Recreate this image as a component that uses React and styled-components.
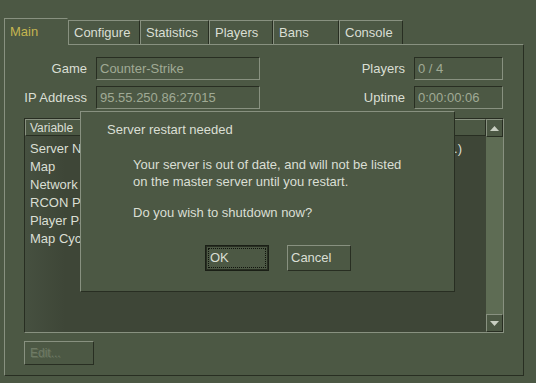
import React from "react";
import styled, { createGlobalStyle } from "styled-components";

const C = {
  bg: "#4c5844",
  light: "#889180",
  dark: "#282e22",
  text: "#dadfd4",
  dim: "#a0aa95",
  gold: "#c4b550",
  list: "#3e4637",
  track: "#5e6c54",
};

const Global = createGlobalStyle`
  html, body { margin: 0; padding: 0; background: ${C.bg}; }
  body { font-family: "Liberation Sans", Tahoma, sans-serif; font-size: 12px; color: ${C.text}; }
`;

const Screen = styled.div`
  position: relative;
  width: 536px;
  height: 383px;
  overflow: hidden;
  background: ${C.bg};
  padding: 18px 0 0 4px;
  box-sizing: border-box;
`;

const TabBar = styled.div`
  display: flex;
  align-items: flex-end;
  height: 26px;
`;

const Tab = styled.div`
  box-sizing: border-box;
  width: ${(p) => p.$w}px;
  height: ${(p) => (p.$active ? 27 : 24)}px;
  margin-bottom: ${(p) => (p.$active ? -1 : 0)}px;
  padding: ${(p) => (p.$active ? "5px 0 0 5px" : "4px 0 0 5px")};
  border-top: 1px solid ${C.light};
  border-left: 1px solid ${C.light};
  border-right: 1px solid ${(p) => (p.$active ? C.bg : C.dark)};
  background: ${C.bg};
  color: ${(p) => (p.$active ? C.gold : C.text)};
  font-size: 13px;
  position: relative;
  z-index: ${(p) => (p.$active ? 2 : 1)};
`;

const Panel = styled.div`
  box-sizing: border-box;
  width: 520px;
  height: 332px;
  border-top: 1px solid ${C.light};
  border-left: 1px solid ${C.light};
  border-right: 1px solid ${C.dark};
  border-bottom: 1px solid ${C.dark};
  padding: 12px 0 0 19px;
`;

const InfoGrid = styled.div`
  display: grid;
  grid-template-columns: 63px 164px 1fr 89px;
  column-gap: 9px;
  row-gap: 6px;
  width: 479px;
  align-items: center;
`;

const Label = styled.div`
  text-align: right;
  font-size: 13px;
  color: ${C.text};
`;

const Field = styled.div`
  box-sizing: border-box;
  height: 23px;
  border-top: 1px solid ${C.dark};
  border-left: 1px solid ${C.dark};
  border-right: 1px solid ${C.light};
  border-bottom: 1px solid ${C.light};
  padding: 3px 0 0 3px;
  color: ${C.dim};
  font-size: 13px;
  white-space: nowrap;
`;

const ListBox = styled.div`
  box-sizing: border-box;
  margin-top: 9px;
  width: 480px;
  height: 215px;
  display: flex;
  border-top: 1px solid ${C.dark};
  border-left: 1px solid ${C.dark};
  border-right: 1px solid ${C.light};
  border-bottom: 1px solid ${C.light};
`;

const ListMain = styled.div`
  flex: 1;
  display: flex;
  flex-direction: column;
  background: linear-gradient(90deg, #465040 0px, ${C.list} 40px);
`;

const HeaderRow = styled.div`
  display: flex;
  height: 17px;
  background: ${C.bg};
`;

const HeaderCell = styled.div`
  box-sizing: border-box;
  width: ${(p) => p.$w || "auto"};
  flex: ${(p) => (p.$w ? "none" : 1)};
  border-top: 1px solid ${C.light};
  border-left: 1px solid ${C.light};
  border-right: 1px solid ${C.dark};
  border-bottom: 1px solid ${C.dark};
  padding: 1px 0 0 4px;
  font-size: 12px;
  color: ${C.text};
`;

const Rows = styled.div`
  padding-top: 4px;
`;

const Row = styled.div`
  display: grid;
  grid-template-columns: 1fr auto;
  height: 18px;
  line-height: 18px;
  padding: 0 24px 0 5px;
  font-size: 13px;
  color: ${C.text};
  white-space: nowrap;
`;

const ScrollBar = styled.div`
  width: 17px;
  display: flex;
  flex-direction: column;
  background: ${C.track};
`;

const ScrollBtn = styled.div`
  box-sizing: border-box;
  height: 18px;
  background: ${C.bg};
  border-top: 1px solid ${C.light};
  border-left: 1px solid ${C.light};
  border-right: 1px solid ${C.dark};
  border-bottom: 1px solid ${C.dark};
  display: flex;
  align-items: center;
  justify-content: center;
`;

const Track = styled.div`
  flex: 1;
`;

const EditButton = styled.div`
  box-sizing: border-box;
  margin-top: 8px;
  width: 70px;
  height: 24px;
  border-top: 1px solid ${C.light};
  border-left: 1px solid ${C.light};
  border-right: 1px solid ${C.dark};
  border-bottom: 1px solid ${C.dark};
  padding: 4px 0 0 5px;
  color: #6f7a65;
  font-size: 12px;
  text-shadow: 1px 1px 0 #5d6a54;
`;

const Dialog = styled.div`
  position: absolute;
  left: 80px;
  top: 111px;
  width: 375px;
  height: 181px;
  box-sizing: border-box;
  background: ${C.bg};
  border-top: 1px solid ${C.light};
  border-left: 1px solid ${C.light};
  border-right: 1px solid ${C.dark};
  border-bottom: 1px solid ${C.dark};
  display: flex;
  flex-direction: column;
  padding: 10px 0 0 26px;
`;

const DialogTitle = styled.div`
  font-size: 13px;
  color: ${C.text};
`;

const Message = styled.div`
  margin-top: 19px;
  padding-left: 26px;
  font-size: 13px;
  line-height: 17px;
  color: ${C.text};
`;

const Gap = styled.div`
  height: 14px;
`;

const ButtonRow = styled.div`
  display: flex;
  gap: 18px;
  margin-top: 24px;
  padding-left: 98px;
`;

const DlgButton = styled.div`
  box-sizing: border-box;
  width: 64px;
  height: 26px;
  font-size: 13px;
  color: ${C.text};
  position: relative;
  padding: 4px 0 0 ${(p) => (p.$default ? 4 : 3)}px;
  border-top: 1px solid ${(p) => (p.$default ? "#1a1f16" : C.light)};
  border-left: 1px solid ${(p) => (p.$default ? "#1a1f16" : C.light)};
  border-right: 1px solid ${(p) => (p.$default ? "#1a1f16" : C.dark)};
  border-bottom: 1px solid ${(p) => (p.$default ? "#1a1f16" : C.dark)};
  outline: ${(p) => (p.$default ? `1px solid ${C.dark}` : "none")};
  outline-offset: -2px;
`;

const Focus = styled.div`
  position: absolute;
  inset: 2px;
  border: 1px dotted #11140e;
`;

const Arrow = ({ up }) => (
  <svg width="9" height="5" viewBox="0 0 9 5">
    <polygon points={up ? "4.5,0 9,5 0,5" : "0,0 9,0 4.5,5"} fill="#c9cfc2" />
  </svg>
);

const tabs = [
  ["Main", 64],
  ["Configure", 72],
  ["Statistics", 69],
  ["Players", 64],
  ["Bans", 66],
  ["Console", 64],
];

const rows = [
  ["Server Name", "(...)"],
  ["Map", ""],
  ["Network", ""],
  ["RCON Password", ""],
  ["Player Password", ""],
  ["Map Cycle", ""],
];

export default function App() {
  return (
    <>
      <Global />
      <Screen>
        <TabBar>
          {tabs.map(([t, w], i) => (
            <Tab key={t} $w={w} $active={i === 0}>
              {t}
            </Tab>
          ))}
        </TabBar>
        <Panel>
          <InfoGrid>
            <Label>Game</Label>
            <Field>Counter-Strike</Field>
            <Label>Players</Label>
            <Field>0 / 4</Field>
            <Label>IP Address</Label>
            <Field>95.55.250.86:27015</Field>
            <Label>Uptime</Label>
            <Field>0:00:00:06</Field>
          </InfoGrid>
          <ListBox>
            <ListMain>
              <HeaderRow>
                <HeaderCell $w="250px">Variable</HeaderCell>
                <HeaderCell>Value</HeaderCell>
              </HeaderRow>
              <Rows>
                {rows.map(([k, v]) => (
                  <Row key={k}>
                    <span>{k}</span>
                    <span>{v}</span>
                  </Row>
                ))}
              </Rows>
            </ListMain>
            <ScrollBar>
              <ScrollBtn>
                <Arrow up />
              </ScrollBtn>
              <Track />
              <ScrollBtn>
                <Arrow />
              </ScrollBtn>
            </ScrollBar>
          </ListBox>
          <EditButton>Edit...</EditButton>
        </Panel>
        <Dialog>
          <DialogTitle>Server restart needed</DialogTitle>
          <Message>
            Your server is out of date, and will not be listed
            <br />
            on the master server until you restart.
            <Gap />
            Do you wish to shutdown now?
          </Message>
          <ButtonRow>
            <DlgButton $default>
              <Focus />
              OK
            </DlgButton>
            <DlgButton>Cancel</DlgButton>
          </ButtonRow>
        </Dialog>
      </Screen>
    </>
  );
}
